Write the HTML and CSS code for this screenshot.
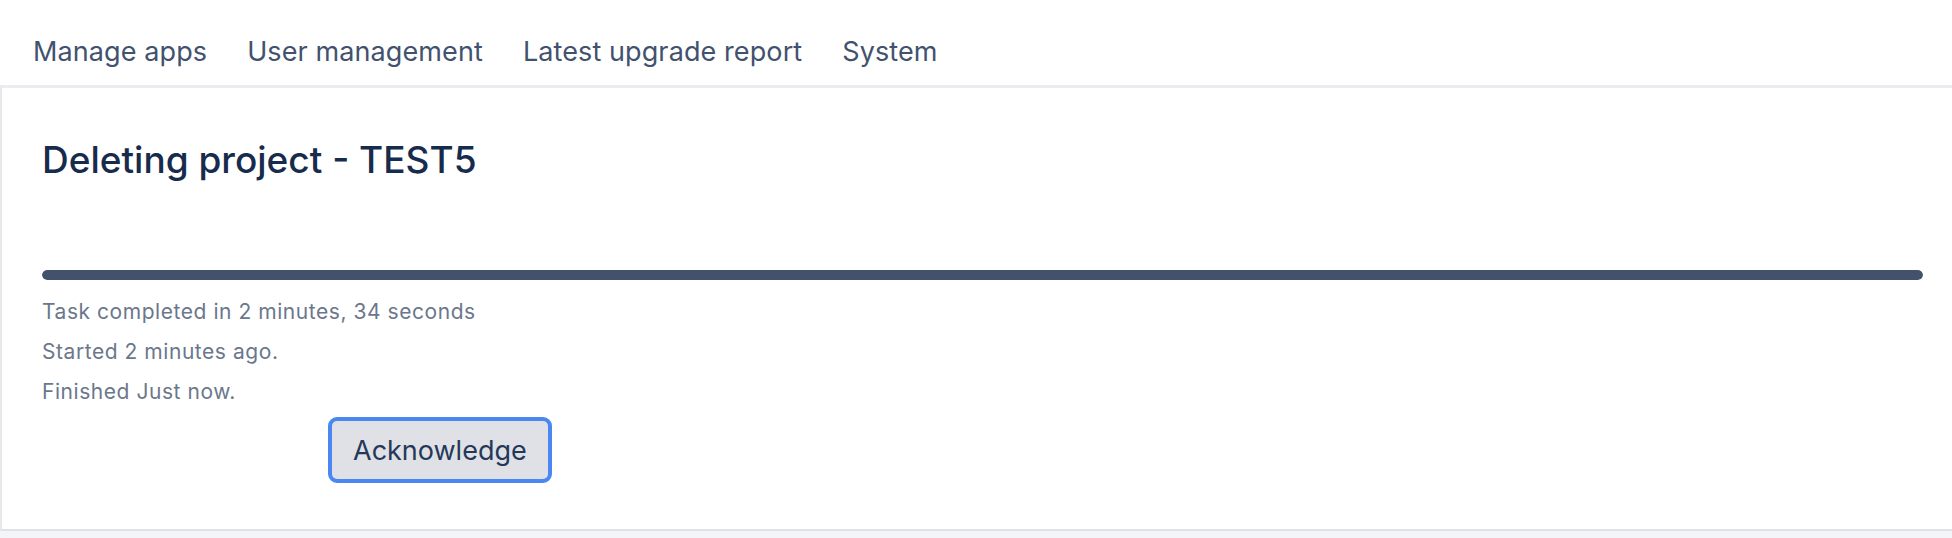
FILE: index.html
```html
<!DOCTYPE html>
<html lang="en">
<head>
<meta charset="utf-8">
<title>Deleting project - TEST5</title>
<link rel="stylesheet" href="styles.css">
</head>
<body>
<nav class="admin-nav">
  <a class="nav-item" href="#">Manage apps</a>
  <a class="nav-item" href="#">User management</a>
  <a class="nav-item" href="#">Latest upgrade report</a>
  <a class="nav-item" href="#">System</a>
</nav>
<main class="panel">
  <h2 class="title">Deleting project - TEST5</h2>
  <div class="progress"><div class="progress-fill" style="width:100%"></div></div>
  <p class="status">Task completed in 2 minutes, 34 seconds</p>
  <p class="status">Started 2 minutes ago.</p>
  <p class="status">Finished Just now.</p>
  <div class="actions">
    <button class="btn" type="button">Acknowledge</button>
  </div>
</main>
<div class="page-foot"></div>
</body>
</html>
```
FILE: styles.css
```css
html, body {
  margin: 0;
  padding: 0;
  background: #ffffff;
  font-family: Inter, "Noto Sans", "Liberation Sans", sans-serif;
}

.admin-nav {
  display: flex;
  gap: 40px;
  height: 85px;
  box-sizing: border-box;
  padding: 35px 0 0 33px;
}

.nav-item {
  font-size: 27px;
  line-height: 34px;
  letter-spacing: 0.1px;
  color: #42526e;
  text-decoration: none;
}

.panel {
  border-top: 3px solid #ebecf0;
  border-left: 2px solid #e6e8ec;
  border-bottom: 2px solid #dfe1e6;
  padding: 50px 29px 46px 40px;
}

.title {
  margin: 0;
  font-size: 37px;
  line-height: 44px;
  font-weight: 500;
  color: #172b4d;
}

.progress {
  margin-top: 88px;
  height: 10px;
  border-radius: 5px;
  background: #dfe1e6;
  overflow: hidden;
}

.progress-fill {
  height: 100%;
  background: #44516c;
  border-radius: 5px;
}

.status {
  margin: 0;
  font-size: 21px;
  line-height: 40px;
  letter-spacing: 0.55px;
  color: #6b778c;
}

.progress + .status {
  margin-top: 12px;
}

.actions {
  margin-top: 5px;
  padding-left: 286px;
}

.btn {
  height: 66px;
  box-sizing: border-box;
  padding: 0 21px;
  border: 4px solid #4a87f2;
  border-radius: 9px;
  background: #dfe1e6;
  font-family: inherit;
  font-size: 27px;
  color: #253858;
  cursor: pointer;
}

.page-foot {
  height: 7px;
  background: #f4f5f7;
}
```
